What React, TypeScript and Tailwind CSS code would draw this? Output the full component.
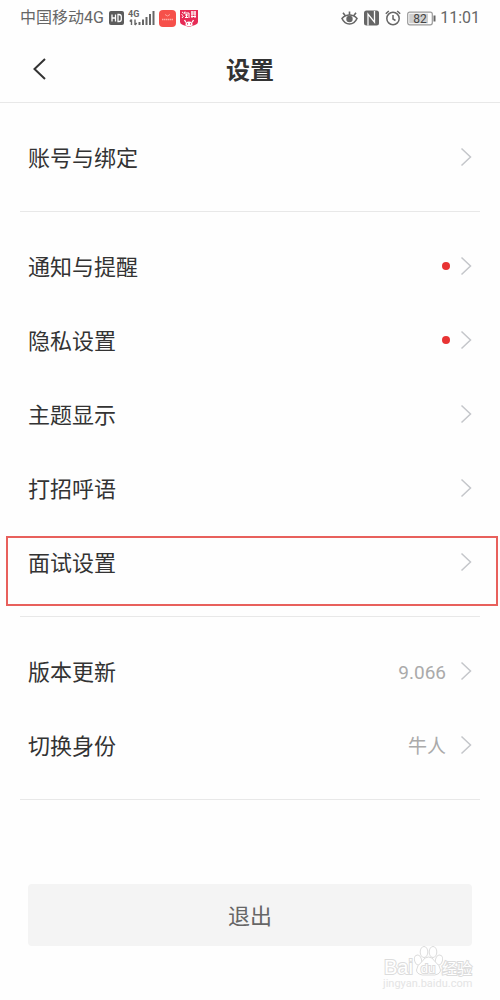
import React from 'react'

type Item = {
  label: string
  value?: string
  dot?: boolean
  marked?: boolean
}

const sections: Item[][] = [
  [{ label: '账号与绑定' }],
  [
    { label: '通知与提醒', dot: true },
    { label: '隐私设置', dot: true },
    { label: '主题显示' },
    { label: '打招呼语' },
    { label: '面试设置', marked: true },
  ],
  [
    { label: '版本更新', value: '9.066' },
    { label: '切换身份', value: '牛人' },
  ],
]

function StatusBar() {
  return (
    <div className="flex h-9 items-center justify-between px-5 text-[#666]">
      <div className="flex items-center">
        <span className="text-base leading-6">中国移动4G</span>
        <svg className="ml-[5px]" width="15" height="14" viewBox="0 0 15 14">
          <rect width="15" height="14" rx="2" fill="#5c5c5c" />
          <path d="M3 3.500v7M6.500 3.500v7M3 7h3.500M9 3.500v7h1q2.300 0 2.300-2.300v-2.400q0-2.300-2.300-2.300z" fill="none" stroke="#fff" strokeWidth="1.300" />
        </svg>
        <svg className="ml-1" width="27" height="18" viewBox="0 0 27 18">
          <text x="0" y="8" fontSize="9" fontWeight="700" fill="#666">4G</text>
          <path d="M3.500 16v-5.500M1.800 12.500l1.700-2M7 10.500V16M8.700 14L7 16" fill="none" stroke="#666" strokeWidth="1.400" />
          <path d="M11.500 13v3M15 10.500V16M18.500 8v8M22 5v11M25.500 2v14" stroke="#666" strokeWidth="2" />
        </svg>
        <svg className="ml-1" width="17" height="17" viewBox="0 0 17 17">
          <rect width="17" height="17" rx="4" fill="#f6504a" />
          <path d="M6 4.500q2.500 3 5 0" fill="none" stroke="#ffa39b" />
          <path d="M3 9.500h11" stroke="#ffaaa4" strokeWidth="1.600" strokeDasharray="1.500 .5" />
        </svg>
        <svg className="ml-1" width="18" height="17" viewBox="0 0 18 17">
          <path d="M0 0h18v12q0 2-3 3l-6 2-6-2q-3-1-3-3z" fill="#e62a55" />
          <path d="M2 2l1.500 1M1.500 4.500L3 5.500M2 8l1.500-2M5 1.500L4 4M5 3h4v5M5 5h3M6.500 4v3.500M5 7.500h3M11 2h5M11 4h5M12 1v7M15 1v7M11 6.500h5" stroke="#fff" fill="none" />
          <path d="M5.500 15.500q-.5-4 3.500-4t3.500 4L9 16.500z" fill="#fff" />
          <path d="M7 13.800h1M10 13.800h1" stroke="#e62a55" strokeWidth="1.200" />
          <path d="M6 12.500L4.500 10M12 12.500l1.500-2.500" stroke="#fff" strokeWidth="1.300" />
        </svg>
      </div>
      <div className="flex items-center">
        <svg width="17" height="16" viewBox="0 0 17 16" fill="none" stroke="#666" strokeWidth="1.600">
          <path d="M1 8.500q3-3.500 7.500-3.500T16 8.500q-2.500 5.500-7.500 5.500T1 8.500z" />
          <circle cx="8.500" cy="9" r="2.400" fill="#666" />
          <path d="M8.500 5V1.500M4.500 6L2 2.800M12.500 6L15 2.800" />
        </svg>
        <svg className="ml-1.5" width="15" height="16" viewBox="0 0 15 16">
          <rect y=".5" width="15" height="15" rx="2.500" fill="#666" />
          <path d="M4 15.500V4.200l6.500 8V1" fill="none" stroke="#fff" strokeWidth="1.300" />
        </svg>
        <svg className="ml-1.5" width="16" height="16" viewBox="0 0 16 16" fill="none" stroke="#666" strokeWidth="1.500">
          <circle cx="8" cy="8.500" r="6.200" />
          <path d="M8 5v4l2.500 1.500M.8 3.800L3.800 1M15.200 3.800L12.200 1" />
        </svg>
        <svg className="ml-1.5" width="29" height="15" viewBox="0 0 29 15">
          <rect x=".7" y="1.200" width="24.600" height="12.600" rx="2" fill="#fff" stroke="#999" strokeWidth="1.200" />
          <rect x="2.200" y="2.700" width="18.800" height="9.600" fill="#cfcfcf" />
          <path d="M27.500 4.500v6" stroke="#666" strokeWidth="2" />
          <text x="13" y="12" fontSize="12" textAnchor="middle" fill="#444">82</text>
        </svg>
        <span className="ml-1 text-base leading-6">11:01</span>
      </div>
    </div>
  )
}

function SettingRow({ label, value, dot, marked }: Item) {
  return (
    <li className="relative">
      <button type="button" className="flex h-[74px] w-full items-center px-7 text-left">
        <span className="flex-1 pt-1 text-[22px] leading-8 text-[#333]">{label}</span>
        {value && <span className="mr-3.5 pt-1 text-[19px] leading-8 text-[#aaa]">{value}</span>}
        {dot && <span className="mr-2.5 h-2 w-2 rounded-full bg-[#e83333]" />}
        <svg width="12" height="20" viewBox="0 0 12 20" fill="none" stroke="#c4c6ca" strokeWidth="1.500">
          <path d="M1.500 1.500L10.500 10l-9 8.500" />
        </svg>
      </button>
      {marked && (
        <div className="pointer-events-none absolute left-1.5 right-0.5 top-[11px] h-[70px] border-2 border-[#e8605c]" />
      )}
    </li>
  )
}

function Watermark() {
  return (
    <svg className="pointer-events-none absolute right-6 top-[61px]" width="94" height="46" viewBox="0 0 94 46">
      <g fill="#fff" stroke="#dcdcdc" strokeWidth="1">
        <text x="2" y="29" fontSize="20" fontFamily="Liberation Sans" strokeWidth="2" paintOrder="stroke">Bai</text>
        <ellipse cx="42" cy="7" rx="3.800" ry="5.500" />
        <ellipse cx="51" cy="7" rx="3.800" ry="5.500" />
        <ellipse cx="36" cy="15" rx="3.500" ry="5" transform="rotate(-15 36 15)" />
        <ellipse cx="57" cy="15" rx="3.500" ry="5" transform="rotate(15 57 15)" />
        <path d="M46.500 12q4 0 6 4 6 5 6 9t-6 5h-12q-6-1-6-5t6-9q2-4 6-4z" />
        <text x="46" y="28" fontSize="13" textAnchor="middle" fontFamily="Liberation Sans" strokeWidth="2" paintOrder="stroke">du</text>
        <text x="60" y="29" fontSize="15" strokeWidth="2" paintOrder="stroke">经验</text>
      </g>
      <text x="1" y="42" fontSize="11" fill="#e4e4e4">jingyan.baidu.com</text>
    </svg>
  )
}

export default function App() {
  return (
    <div className="min-h-screen bg-[#fefefe] font-[Roboto,'Noto_Sans_CJK_SC',sans-serif]">
      <StatusBar />
      <header className="grid h-[67px] grid-cols-[1fr_auto_1fr] items-center border-b border-[#e8e8e8] px-7">
        <button type="button" aria-label="返回" className="w-6">
          <svg width="24" height="24" viewBox="0 0 24 24" fill="none" stroke="#333" strokeWidth="2">
            <path d="M17 2L6.500 12 17 22" />
          </svg>
        </button>
        <h1 className="pt-1 text-2xl font-bold text-[#333]">设置</h1>
      </header>

      <main>
        {sections.map((items, i) => (
          <section key={i}>
            <ul className="py-[17px]">
              {items.map((item) => (
                <SettingRow key={item.label} {...item} />
              ))}
            </ul>
            <hr className="mx-5 border-[#e8e8e8]" />
          </section>
        ))}
        <div className="relative mt-[84px] px-7 pb-12">
          <button type="button" className="h-[62px] w-full rounded bg-[#f4f4f4] pt-0.5 text-[22px] text-[#666]">
            退出
          </button>
          <Watermark />
        </div>
      </main>
    </div>
  )
}
